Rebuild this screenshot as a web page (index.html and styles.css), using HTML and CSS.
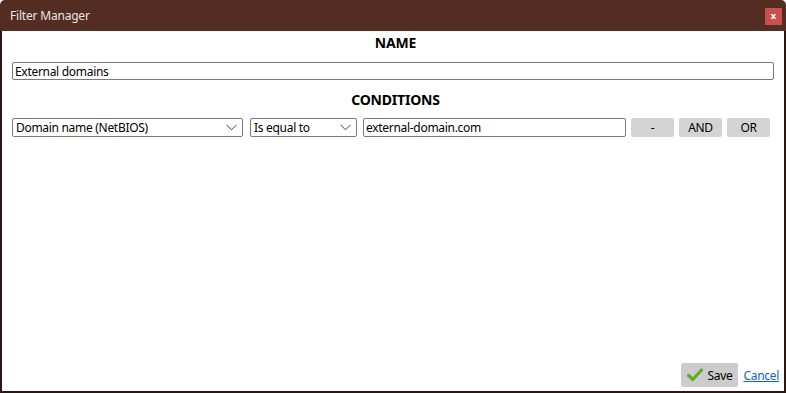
FILE: index.html
```html
<!DOCTYPE html>
<html>
<head>
<meta charset="utf-8">
<link rel="stylesheet" href="styles.css">
</head>
<body>
<div class="window">
  <div class="titlebar">
    <span class="title">Filter Manager</span>
    <button class="close">x</button>
  </div>
  <div class="content">
    <div class="heading">NAME</div>
    <div class="name-row"><input class="textbox wide" type="text" value="External domains"></div>
    <div class="heading conditions">CONDITIONS</div>
    <div class="cond-row">
      <div class="combo combo-field">
        <span>Domain name (NetBIOS)</span>
        <svg class="chev" width="11" height="7" viewBox="0 0 11 7"><path d="M0.5 0.8 L5.5 5.8 L10.5 0.8" fill="none" stroke="#444" stroke-width="1"/></svg>
      </div>
      <div class="combo combo-op">
        <span>Is equal to</span>
        <svg class="chev" width="11" height="7" viewBox="0 0 11 7"><path d="M0.5 0.8 L5.5 5.8 L10.5 0.8" fill="none" stroke="#444" stroke-width="1"/></svg>
      </div>
      <input class="textbox value" type="text" value="external-domain.com">
      <button class="btn">-</button>
      <button class="btn">AND</button>
      <button class="btn">OR</button>
    </div>
    <div class="spacer"></div>
    <div class="footer">
      <button class="save">
        <svg width="16" height="14" viewBox="0 0 16 14"><path d="M1.5 7.5 L5.8 11.5 L14.5 2" fill="none" stroke="#5fae23" stroke-width="3.2" stroke-linecap="round" stroke-linejoin="round"/></svg>
        <span>Save</span>
      </button>
      <a class="cancel" href="#">Cancel</a>
    </div>
  </div>
</div>
</body>
</html>
```
FILE: styles.css
```css
html, body {
  margin: 0;
  padding: 0;
  background: #ffffff;
}
body {
  font-family: "Segoe UI", "Noto Sans", "Open Sans", sans-serif;
  font-size: 12px;
  color: #000;
}
.window {
  width: 786px;
  height: 393px;
  display: flex;
  flex-direction: column;
  box-sizing: border-box;
}
.titlebar {
  height: 31px;
  flex: none;
  background: #532c22;
  border-radius: 5px 5px 0 0;
  display: flex;
  align-items: center;
  justify-content: space-between;
  padding: 0 4px 0 10px;
}
.title {
  color: #ece4e2;
  font-size: 12px;
  letter-spacing: -0.2px;
  margin-top: -1px;
}
.close {
  width: 17px;
  height: 17px;
  background: #c9504d;
  border: none;
  color: #fff;
  font-family: "DejaVu Sans", sans-serif;
  font-weight: bold;
  font-size: 9px;
  line-height: 15px;
  padding: 0;
  margin-top: 1px;
}
.content {
  flex: 1;
  display: flex;
  flex-direction: column;
  border-left: 2px solid #2a1711;
  border-right: 2px solid #2a1711;
  border-bottom: 2px solid #2a1711;
  padding: 2px 5px 4px 10px;
}
.heading {
  text-align: center;
  font-weight: bold;
  font-size: 14px;
  line-height: 20px;
  letter-spacing: -0.2px;
}
.name-row {
  margin-top: 9px;
}
.textbox {
  font-family: inherit;
  font-size: 12px;
  letter-spacing: -0.3px;
  height: 18px;
  box-sizing: border-box;
  border: 1px solid #7a7a7a;
  border-radius: 2px;
  padding: 0 2px;
  margin: 0;
  color: #000;
  background: #fff;
  outline: none;
}
.wide {
  width: 762px;
}
.conditions {
  margin-top: 10px;
}
.cond-row {
  margin-top: 8px;
  display: flex;
  align-items: center;
  height: 19px;
}
.combo {
  height: 19px;
  box-sizing: border-box;
  border: 1px solid #7a7a7a;
  border-radius: 2px;
  display: flex;
  align-items: center;
  justify-content: space-between;
  padding: 0 5px 0 3px;
  letter-spacing: -0.3px;
}
.combo-field {
  width: 231px;
}
.combo-op {
  width: 107px;
  margin-left: 7px;
}
.chev {
  flex: none;
}
.value {
  width: 263px;
  height: 19px;
  margin-left: 6px;
}
.btn {
  height: 19px;
  border: none;
  border-radius: 2px;
  background: #d4d4d4;
  font-family: inherit;
  font-size: 12px;
  letter-spacing: -0.3px;
  color: #000;
  padding: 0;
  margin-left: 5px;
  width: 43px;
}
.spacer {
  flex: 1;
}
.footer {
  display: flex;
  justify-content: flex-end;
  align-items: center;
  gap: 5px;
}
.save {
  width: 57px;
  height: 24px;
  border: none;
  border-radius: 2px;
  background: #cccccc;
  display: flex;
  align-items: center;
  gap: 4px;
  padding: 0 0 0 6px;
  font-family: inherit;
  font-size: 12px;
  letter-spacing: -0.3px;
  color: #000;
}
.cancel {
  color: #0a66cc;
  text-decoration: underline;
  font-size: 12px;
  letter-spacing: -0.3px;
}
```
